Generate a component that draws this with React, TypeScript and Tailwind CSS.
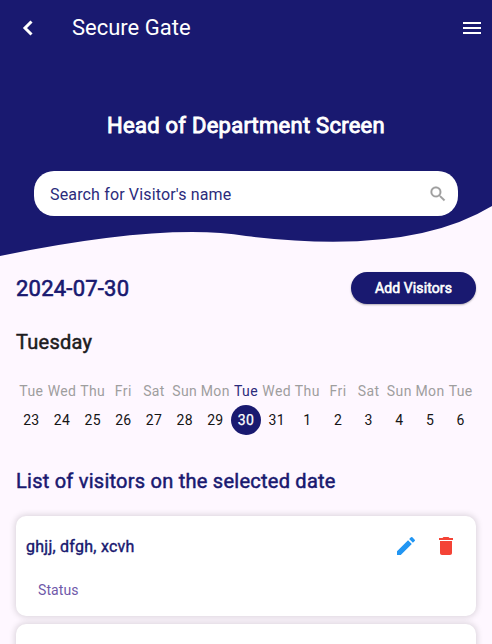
const days = [
  ["Tue", 23], ["Wed", 24], ["Thu", 25], ["Fri", 26], ["Sat", 27], ["Sun", 28], ["Mon", 29],
  ["Tue", 30], ["Wed", 31], ["Thu", 1], ["Fri", 2], ["Sat", 3], ["Sun", 4], ["Mon", 5], ["Tue", 6],
] as const;

const selected = 30;

function Header() {
  return (
    <header className="relative h-64 text-white">
      <svg className="absolute inset-0" width="492" height="256" viewBox="0 0 492 256">
        <path d="M0 0H492V206Q410 256 246 236Q164 222.500 0 256Z" fill="#191970" />
      </svg>
      <div className="relative flex flex-col">
        <div className="flex h-14 items-center pr-2">
          <button className="flex w-14 items-center justify-center" aria-label="Back">
            <svg width="24" height="24" viewBox="0 0 24 24" fill="none" stroke="#fff" strokeWidth="3">
              <path d="M15.500 5.500L9 12l6.500 6.500" />
            </svg>
          </button>
          <h1 className="ml-4 flex-1 text-[22px] leading-7">Secure Gate</h1>
          <svg width="24" height="24" viewBox="0 0 24 24" fill="#fff">
            <path d="M3 18h18v-2H3v2zm0-5h18v-2H3v2zm0-7v2h18V6H3z" />
          </svg>
        </div>
        <h2 className="mt-14 text-center text-[22px] leading-7 tracking-[0.25px] [-webkit-text-stroke:0.9px_currentColor]">
          Head of Department Screen
        </h2>
        <div className="mx-[34px] mt-[31px] flex h-[45px] items-center justify-between rounded-[20px] bg-white pr-[10px] pl-4">
          <span className="pt-0.5 text-base tracking-[0.15px] text-[#2b2b7b]">Search for Visitor's name</span>
          <svg width="20" height="20" viewBox="0 0 24 24" fill="#9e9e9e" stroke="#9e9e9e" strokeWidth="0.3">
            <path d="M15.500 14h-.79l-.28-.27A6.471 6.471 0 0 0 16 9.500 6.500 6.500 0 1 0 9.500 16c1.610 0 3.090-.59 4.230-1.570l.27.28v.79l5 4.990L20.490 19l-4.990-5zm-6 0C7.010 14 5 11.990 5 9.500S7.010 5 9.500 5 14 7.010 14 9.500 11.990 14 9.500 14z" />
          </svg>
        </div>
      </div>
    </header>
  );
}

function VisitorCard({ names }: { names: string }) {
  return (
    <article className="h-[100px] shrink-0 rounded-[10px] bg-white pt-[10px] pr-[10px] pl-[10px] shadow-[0_0_6px_1px_rgba(0,0,0,0.15)]">
      <div className="flex h-10 items-center">
        <span className="flex-1 pt-0.5 text-base tracking-[0.25px] text-[#191970] [-webkit-text-stroke:0.4px_currentColor]">{names}</span>
        <span className="flex size-10 items-center justify-center">
          <svg width="24" height="24" viewBox="0 0 24 24" fill="#2196f3">
            <path d="M3 17.250V21h3.750L17.810 9.940l-3.750-3.750L3 17.250zM20.710 7.040a.996.996 0 0 0 0-1.410l-2.340-2.340a.996.996 0 0 0-1.410 0l-1.830 1.830 3.750 3.750 1.830-1.830z" />
          </svg>
        </span>
        <span className="flex size-10 items-center justify-center">
          <svg width="24" height="24" viewBox="0 0 24 24" fill="#f44336">
            <path d="M6 19c0 1.100.9 2 2 2h8c1.100 0 2-.9 2-2V7H6v12zM19 4h-3.500l-1-1h-5l-1 1H5v2h14V4z" />
          </svg>
        </span>
      </div>
      <div className="mt-[14px] ml-3 text-sm leading-5 tracking-[0.1px] text-[#6f59a9]">Status</div>
    </article>
  );
}

export default function App() {
  return (
    <div className="h-[644px] w-[492px] overflow-hidden bg-[#fef7ff] font-[Roboto,sans-serif]">
      <Header />
      <main className="flex flex-col px-4 pt-4">
        <div className="flex h-8 items-center justify-between">
          <span className="pt-0.5 text-[22px] leading-7 tracking-[0.22px] text-[#191970] [-webkit-text-stroke:0.6px_currentColor]">2024-07-30</span>
          <button className="h-8 w-[125px] rounded-2xl bg-[#191970] text-sm tracking-[0.1px] text-white shadow-[0_1px_2px_rgba(0,0,0,0.3)] [-webkit-text-stroke:0.6px_currentColor]">
            Add Visitors
          </button>
        </div>
        <div className="mt-6 text-xl leading-7 tracking-[0.25px] text-[#1d1b20] [-webkit-text-stroke:0.5px_currentColor]">Tuesday</div>
        <div className="mt-[25px] grid grid-cols-15">
          {days.map(([name, number]) => (
            <div key={number} className="flex flex-col items-center text-sm">
              <span className={`tracking-[0.4px] whitespace-nowrap ${number === selected ? "text-[#2b2b7b]" : "text-[#9e9e9e]"}`}>{name}</span>
              <span className={`mt-1 flex size-[30px] items-center justify-center rounded-full tracking-[0.25px] ${number === selected ? "bg-[#191970] text-white [-webkit-text-stroke:0.25px_currentColor]" : "text-[#151515]"}`}>
                {number}
              </span>
            </div>
          ))}
        </div>
        <h3 className="mt-8 text-xl leading-7 tracking-[0.25px] text-[#191970] [-webkit-text-stroke:0.5px_currentColor]">
          List of visitors on the selected date
        </h3>
        <section className="mt-[21px] flex flex-col gap-2">
          <VisitorCard names="ghjj, dfgh, xcvh" />
          <article className="h-[100px] rounded-[10px] bg-white shadow-[0_0_6px_1px_rgba(0,0,0,0.15)]" />
        </section>
      </main>
    </div>
  );
}
